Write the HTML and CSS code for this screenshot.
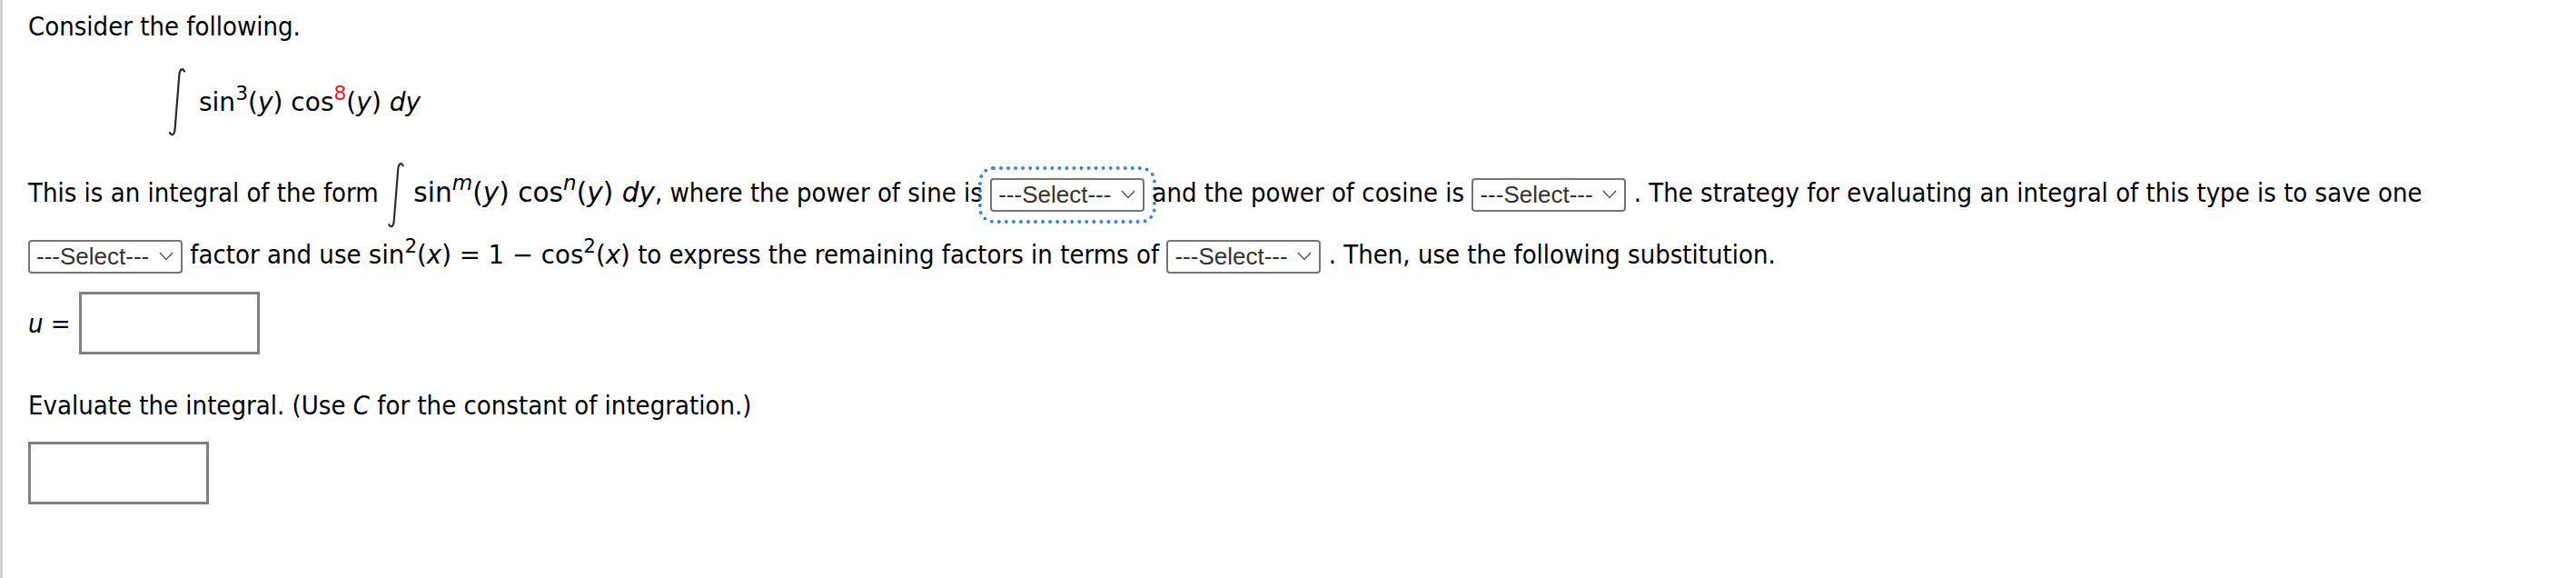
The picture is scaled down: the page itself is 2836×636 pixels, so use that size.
FILE: index.html
```html
<!DOCTYPE html>
<html>
<head>
<meta charset="utf-8">
<link rel="stylesheet" href="styles.css">
</head>
<body>
<div class="page">
  <p class="intro">Consider the following.</p>
  <div class="expr"><svg class="int big" viewBox="0 0 18 76"><path d="M17 4.5 C15.5 1 12.2 1.2 11.4 8 L 6.6 68 C 6 75 2.6 75.5 1 72"/></svg><span class="math">sin<sup>3</sup>(<i>y</i>) cos<sup class="red">8</sup>(<i>y</i>) <i>dy</i></span></div>
  <p class="para"><span class="line">This is an integral of the form <svg class="int small" viewBox="0 0 18 76"><path d="M17 4.5 C15.5 1 12.2 1.2 11.4 8 L 6.6 68 C 6 75 2.6 75.5 1 72"/></svg> <span class="math m2">sin<sup><i>m</i></sup>(<i>y</i>) cos<sup><i>n</i></sup>(<i>y</i>) <i>dy</i></span>, where the power of sine is <span class="sel focus">---Select---<svg class="chev" viewBox="0 0 16 10"><polyline points="1,1 8,8.5 15,1"/></svg></span> and the power of cosine is <span class="sel">---Select---<svg class="chev" viewBox="0 0 16 10"><polyline points="1,1 8,8.5 15,1"/></svg></span> . The strategy for evaluating an integral of this type is to save one</span><br><span class="line"><span class="sel">---Select---<svg class="chev" viewBox="0 0 16 10"><polyline points="1,1 8,8.5 15,1"/></svg></span> factor and use <span class="math m3">sin<sup>2</sup>(<i>x</i>) = 1 − cos<sup>2</sup>(<i>x</i>)</span> to express the remaining factors in terms of <span class="sel">---Select---<svg class="chev" viewBox="0 0 16 10"><polyline points="1,1 8,8.5 15,1"/></svg></span> . Then, use the following substitution.</span></p>
  <div class="urow"><span class="ulabel"><i>u</i> =</span><span class="box"></span></div>
  <p class="eval">Evaluate the integral. (Use <i>C</i> for the constant of integration.)</p>
  <div class="box answer"></div>
</div>
</body>
</html>
```
FILE: styles.css
```css
html, body {
  margin: 0;
  padding: 0;
  background: #fff;
}
.page {
  box-sizing: border-box;
  min-height: 636px;
  border-left: 3px solid #d2d2d2;
  padding-left: 28px;
  padding-top: 9px;
  font-family: "DejaVu Sans Condensed", "DejaVu Sans", sans-serif;
  font-size: 29px;
  color: #000;
}
p { margin: 0; }
i { font-style: italic; }
.math {
  font-family: "DejaVu Sans", sans-serif;
  font-size: 29px;
}
.expr .math {
  font-size: 28px;
}
.math.m2 {
  font-size: 29.6px;
}
.math.m3 {
  font-size: 27.6px;
}
sup {
  font-size: 0.78em;
  vertical-align: 0.55em;
  line-height: 0;
}
.red { color: #e5201b; }
.intro {
  line-height: 40px;
}
.expr {
  margin-top: 23px;
  height: 80px;
  padding-left: 155px;
  display: flex;
  align-items: center;
}
.int {
  display: inline-block;
  fill: none;
  stroke: #2a2a2a;
  stroke-width: 2.2;
  stroke-linecap: round;
}
.int.big {
  width: 18px;
  height: 76px;
  margin-right: 15px;
}
.int.small {
  width: 18px;
  height: 73px;
  vertical-align: middle;
  margin: -12px 2px;
}
.para {
  margin-top: 26px;
  line-height: 68px;
  white-space: nowrap;
}
.sel {
  display: inline-flex;
  align-items: center;
  justify-content: space-between;
  box-sizing: border-box;
  width: 170px;
  height: 37px;
  border: 2px solid #767676;
  border-radius: 4px;
  padding: 0 8px 0 7px;
  font-family: "Liberation Sans", Arial, sans-serif;
  font-size: 26px;
  line-height: 33px;
  color: #333;
  vertical-align: middle;
}
.sel.focus {
  outline: 4px dotted #3b82e0;
  outline-offset: 9px;
}
.chev {
  width: 16px;
  height: 10px;
  fill: none;
  stroke: #555;
  stroke-width: 1.4;
}
.urow {
  margin-top: 6px;
  display: flex;
  align-items: center;
  gap: 15px;
}
.ulabel {
  width: 41px;
  white-space: nowrap;
}
.box {
  display: block;
  box-sizing: border-box;
  width: 199px;
  height: 69px;
  border: 3px solid #808080;
}
.eval {
  margin-top: 36px;
  line-height: 40px;
}
.answer {
  margin-top: 20px;
}
```
